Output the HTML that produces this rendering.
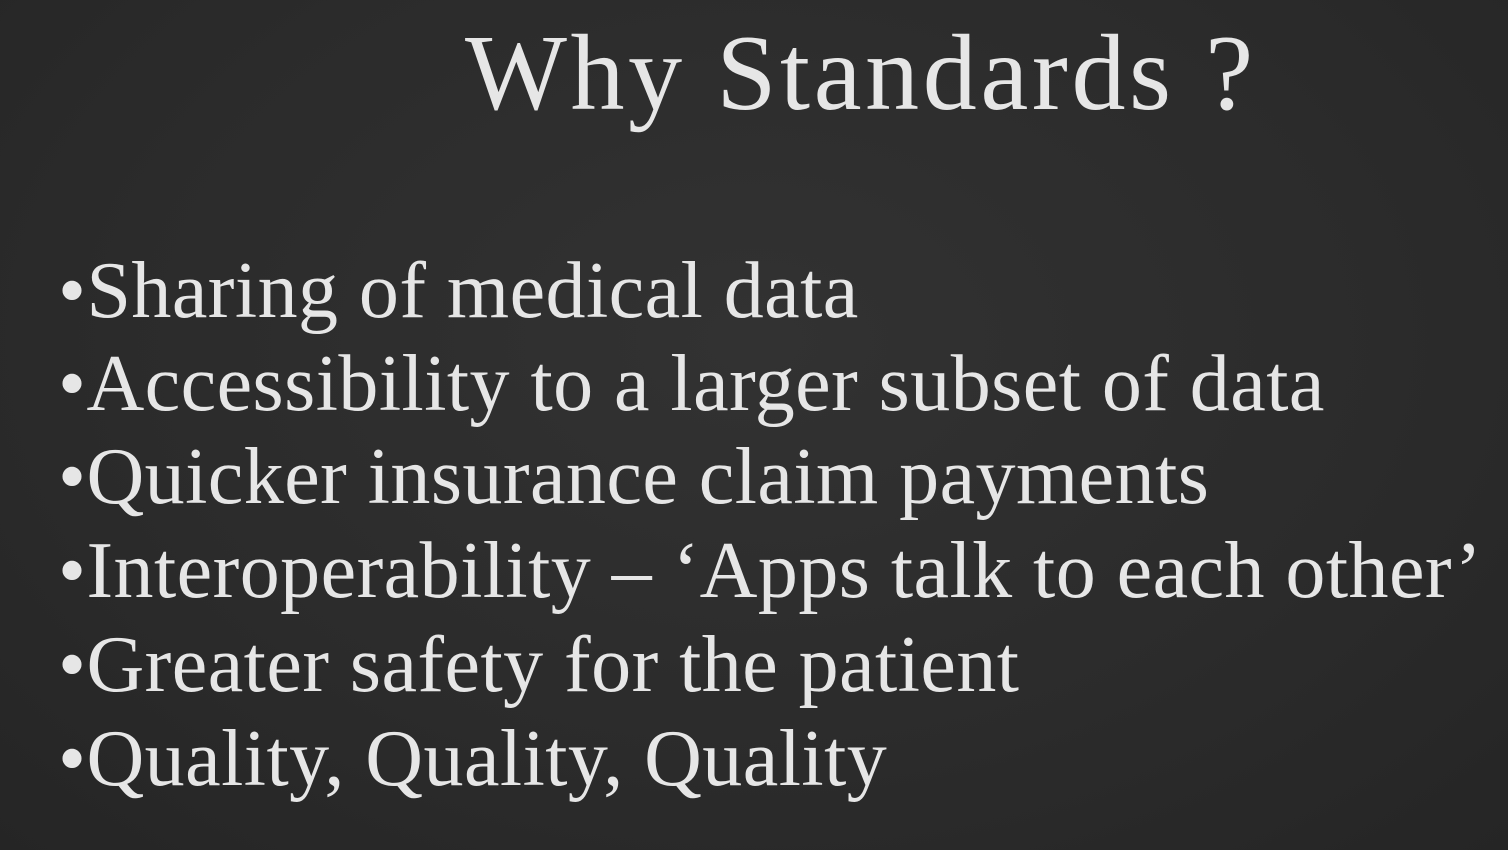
<!DOCTYPE html>
<html><head><meta charset="utf-8"><style>
html,body{margin:0;padding:0;}
body{width:1508px;height:850px;overflow:hidden;background:radial-gradient(ellipse at 50% 40%,#323232 0%,#2b2b2b 60%,#252525 100%);font-family:"Liberation Serif",serif;color:#e6e6e6;position:relative;}
.t{position:absolute;left:465px;top:12px;font-size:108px;white-space:nowrap;letter-spacing:3.6px;}
.b{position:absolute;left:58px;font-size:80px;white-space:nowrap;line-height:1;letter-spacing:0.45px;}
</style></head><body>
<div class="t">Why Standards ?</div>
<div class="b" style="top:251px">•Sharing of medical data</div>
<div class="b" style="top:344px">•Accessibility to a larger subset of data</div>
<div class="b" style="top:437px">•Quicker insurance claim payments</div>
<div class="b" style="top:531px">•Interoperability – ‘Apps talk to each other’</div>
<div class="b" style="top:625px">•Greater safety for the patient</div>
<div class="b" style="top:719px">•Quality, Quality, Quality</div>
</body></html>
